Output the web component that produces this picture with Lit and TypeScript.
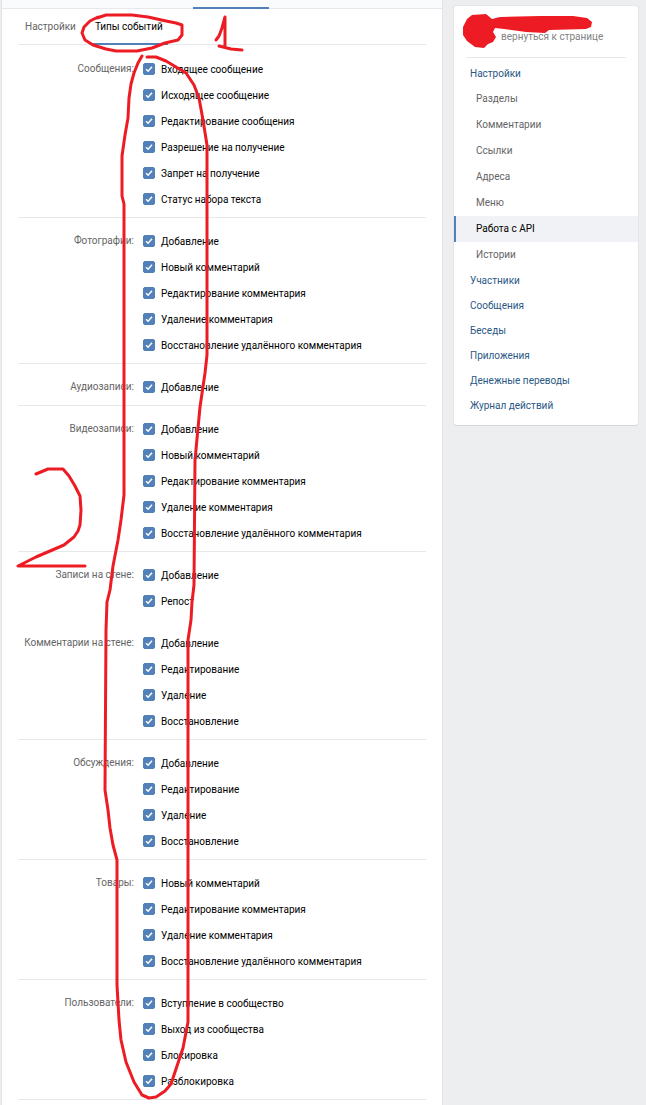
import { LitElement, html, css, svg } from "lit";
import { customElement, state } from "lit/decorators.js";

interface EventGroup {
  title: string;
  open?: boolean;
  items: string[];
}

const COMMENT_EVENTS = [
  "Новый комментарий",
  "Редактирование комментария",
  "Удаление комментария",
  "Восстановление удалённого комментария",
];
const ENTRY_EVENTS = ["Добавление", "Редактирование", "Удаление", "Восстановление"];

const GROUPS: EventGroup[] = [
  {
    title: "Сообщения:",
    items: [
      "Входящее сообщение",
      "Исходящее сообщение",
      "Редактирование сообщения",
      "Разрешение на получение",
      "Запрет на получение",
      "Статус набора текста",
    ],
  },
  { title: "Фотографии:", items: ["Добавление", ...COMMENT_EVENTS] },
  { title: "Аудиозаписи:", items: ["Добавление"] },
  { title: "Видеозаписи:", items: ["Добавление", ...COMMENT_EVENTS] },
  { title: "Записи на стене:", open: true, items: ["Добавление", "Репост"] },
  { title: "Комментарии на стене:", items: ENTRY_EVENTS },
  { title: "Обсуждения:", items: ENTRY_EVENTS },
  { title: "Товары:", items: COMMENT_EVENTS },
  {
    title: "Пользователи:",
    items: ["Вступление в сообщество", "Выход из сообщества", "Блокировка", "Разблокировка"],
  },
];

@customElement("event-group")
class EventGroupElement extends LitElement {
  static properties = { group: { attribute: false } };
  declare group: EventGroup;

  static styles = css`
    :host {
      display: block;
    }
    .group {
      display: grid;
      grid-template-columns: 116px 1fr;
      column-gap: 9px;
      padding: 10px 0 5px;
      border-bottom: 1px solid #e7e8ec;
    }
    .open {
      border-bottom-color: transparent;
    }
    .title {
      color: #656565;
      text-align: right;
      line-height: 26px;
      white-space: nowrap;
    }
    .row {
      display: flex;
      align-items: center;
      gap: 6px;
      height: 26px;
      cursor: pointer;
    }
    .text {
      padding-top: 2px;
    }
    .box {
      appearance: none;
      flex: none;
      width: 12px;
      height: 12px;
      margin: 0;
      border-radius: 2px;
      border: 1px solid #c1c9d1;
      background: #fff;
      cursor: pointer;
    }
    .box:checked {
      border-color: #5181b8;
      background: #5181b8
        url("data:image/svg+xml,%3Csvg xmlns='http://www.w3.org/2000/svg' viewBox='0 0 10 10'%3E%3Cpath d='M2 5.2 4.1 7.2 8 2.8' fill='none' stroke='white' stroke-width='1.5'/%3E%3C/svg%3E")
        center / 10px 10px no-repeat;
    }
  `;

  render() {
    const g = this.group;
    return html`<div class="group ${g.open ? "open" : ""}" role="group" aria-labelledby="title">
      <div class="title" id="title">${g.title}</div>
      <div>
        ${g.items.map(
          (t) => html`<label class="row"
            ><input class="box" type="checkbox" checked /><span class="text">${t}</span></label
          >`
        )}
      </div>
    </div>`;
  }
}

const MENU: { text: string; sub?: boolean }[] = [
  { text: "Настройки" },
  { text: "Разделы", sub: true },
  { text: "Комментарии", sub: true },
  { text: "Ссылки", sub: true },
  { text: "Адреса", sub: true },
  { text: "Меню", sub: true },
  { text: "Работа с API", sub: true },
  { text: "Истории", sub: true },
  { text: "Участники" },
  { text: "Сообщения" },
  { text: "Беседы" },
  { text: "Приложения" },
  { text: "Денежные переводы" },
  { text: "Журнал действий" },
];

@customElement("side-menu")
class SideMenu extends LitElement {
  static properties = { active: { type: String } };
  declare active: string;

  static styles = css`
    :host {
      display: block;
    }
    .card {
      background: #fff;
      border-radius: 3px;
      box-shadow: 0 1px 0 #d7d8db, 0 0 0 1px #e5e6ea;
      padding-bottom: 7px;
    }
    .owner {
      display: flex;
      align-items: flex-end;
      height: 37px;
      margin: 0 12px 3px;
      padding: 0 0 14px 35px;
      border-bottom: 1px solid #e7e8ec;
    }
    .back {
      color: #828282;
      text-decoration: none;
      line-height: 12px;
    }
    .item {
      display: block;
      padding: 0 16px;
      line-height: 25px;
      color: #2a5885;
      text-decoration: none;
    }
    .sub {
      padding: 0 20px;
      line-height: 26px;
      color: #656565;
      border-left: 2px solid transparent;
    }
    .active {
      color: #000;
      background: #f0f2f5;
      border-left-color: #5181b8;
    }
  `;

  render() {
    return html`<nav class="card">
      <div class="owner"><a class="back" href="#">вернуться к странице</a></div>
      ${MENU.map(
        (m) => html`<a
          href="#"
          class="item ${m.sub ? "sub" : ""} ${m.text === this.active ? "active" : ""}"
          >${m.text}</a
        >`
      )}
    </nav>`;
  }
}

const STROKES = [
  // ring round the tab
  "M98 17 L90 21 L84 27 L82 33 L85 40 L93 45 L106 49 L116 51 L137 51 L152 48 L165 43 L178 40 L182 35 L182 25 L176 23 L166 21 L148 17 L132 15 L106 15 L97 18",
  // figure one
  "M216 40 L219 36 L222 28 L225 17 L225 46 M219 46 L231 49 L242 50",
  // figure two
  "M36 474 L48 469 L63 469 L69 476 L75 486 L80 496 L81 510 L80 525 L78 531 L74 537 L64 545 L50 551 L36 557 L28 561 L18 566 L85 566",
  // long loop round the tick boxes
  "M142 56 L138 63 L134 73 L131 84 L129 98 L128 118 L125 135 L122 156 L122 196 L124 204 L124 495 L121 520 L118 540 L113 566 L110 590 L107 602 L106 630 L105 790 L108 810 L110 828 L113 845 L117 860 L117 985 L119 1020 L121 1040 L126 1062 L134 1082 L142 1095 L149 1098 L156 1097 L165 1091 L171 1084 L177 1066 L183 1048 L188 1022 L188 640 L191 620 L192 602 L194 585 L195 460 L200 407 L205 373 L207 355 L207 145 L203 120 L199 98 L194 85 L186 73 L176 67 L166 61 L156 57 L147 57",
];

@customElement("app-root")
class AppRoot extends LitElement {
  @state() private tab = "Типы событий";

  static styles = css`
    :host {
      display: block;
      position: relative;
      overflow: hidden;
      background: #edeef0;
      font: 10px/12px Roboto, "Liberation Sans", sans-serif;
      color: #000;
    }
    .layout {
      display: flex;
      align-items: flex-start;
      gap: 11px;
      padding: 0 8px 0 1px;
    }
    .panel {
      flex: 1;
      background: #fff;
      border: solid #e1e3e7;
      border-width: 0 1px;
      padding-bottom: 10px;
    }
    .top {
      display: flex;
      height: 8px;
      padding-left: 191px;
      background: #fafbfc;
      border-bottom: 1px solid #e7e8ec;
    }
    .marker {
      width: 76px;
      height: 2px;
      margin-top: 7px;
      background: #5181b8;
    }
    .content {
      padding: 0 16px;
    }
    .tabs {
      display: flex;
      gap: 9px;
      height: 35px;
      padding-left: 2px;
      margin-bottom: 1px;
      border-bottom: 1px solid #e7e8ec;
    }
    .tab {
      height: 36px;
      padding: 2px 5px 0;
      border: 0;
      border-bottom: 2px solid transparent;
      background: none;
      font: inherit;
      color: #656565;
      cursor: pointer;
    }
    .selected {
      color: #000;
      border-bottom-color: #5181b8;
    }
    .side {
      width: 184px;
      margin-top: 6px;
    }
    .marks {
      position: absolute;
      top: 0;
      left: 0;
      pointer-events: none;
    }
  `;

  render() {
    return html`
      <div class="layout">
        <main class="panel">
          <div class="top"><div class="marker"></div></div>
          <div class="content">
            <div class="tabs" role="tablist">
              ${["Настройки", "Типы событий"].map(
                (t) => html`<button
                  role="tab"
                  aria-selected=${t === this.tab}
                  class="tab ${t === this.tab ? "selected" : ""}"
                  @click=${() => (this.tab = t)}
                >
                  ${t}
                </button>`
              )}
            </div>
            ${GROUPS.map((g) => html`<event-group .group=${g}></event-group>`)}
          </div>
        </main>
        <side-menu class="side" active="Работа с API"></side-menu>
      </div>
      <svg class="marks" width="646" height="1105" viewBox="0 0 646 1105" aria-hidden="true">
        <g fill="none" stroke="#ed1c24" stroke-width="3" stroke-linecap="round" stroke-linejoin="round">
          ${STROKES.map((d) => svg`<path d=${d} />`)}
        </g>
        <path
          fill="#ed1c24"
          d="M472 15 L486 14 L492 19 L500 17 L540 16 L573 16 L587 18 L592 22 L591 27 L586 29 L549 30 L545 33 L526 32 L504 29 L495 28 L493 32 L496 37 L493 42 L488 44 L484 48 L475 47 L467 41 L463 35 L463 27 L467 19 Z"
        />
      </svg>
    `;
  }
}
